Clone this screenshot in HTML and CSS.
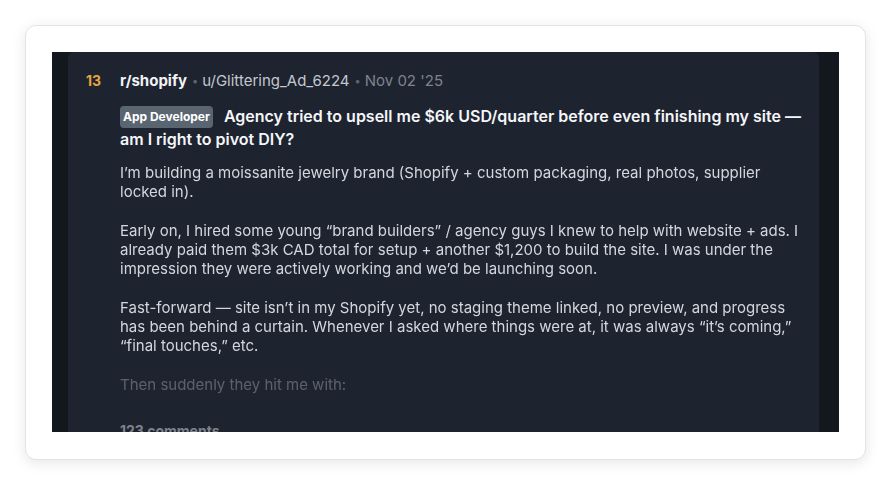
FILE: index.html
```html
<!DOCTYPE html>
<html lang="en">
<head>
<meta charset="utf-8">
<link rel="stylesheet" href="styles.css">
</head>
<body>
<div class="frame">
  <div class="screen">
    <div class="card">
      <div class="rank">13</div>
      <div class="main">
        <div class="meta">
          <span class="sub">r/shopify</span><span class="dot">•</span><span class="user">u/Glittering_Ad_6224</span><span class="dot">•</span><span class="date">Nov 02 '25</span>
        </div>
        <h2 class="title"><span class="flair">App Developer</span>Agency tried to upsell me $6k USD/quarter before even finishing my site — am I right to pivot DIY?</h2>
        <div class="body">
          <p>I’m building a moissanite jewelry brand (Shopify + custom packaging, real photos, supplier locked in).</p>
          <p>Early on, I hired some young “brand builders” / agency guys I knew to help with website + ads. I already paid them $3k CAD total for setup + another $1,200 to build the site. I was under the impression they were actively working and we’d be launching soon.</p>
          <p>Fast-forward — site isn’t in my Shopify yet, no staging theme linked, no preview, and progress has been behind a curtain. Whenever I asked where things were at, it was always “it’s coming,” “final touches,” etc.</p>
          <p>Then suddenly they hit me with:</p>
        </div>
        <div class="footer">123 comments</div>
      </div>
    </div>
  </div>
</div>
</body>
</html>
```
FILE: styles.css
```css
* { box-sizing: border-box; }
html, body { margin: 0; padding: 0; }
body {
  background: #ffffff;
  font-family: Inter, "Noto Sans", "Liberation Sans", sans-serif;
  width: 890px;
  height: 484px;
  overflow: hidden;
}
.frame {
  margin: 25px 0 0 25px;
  width: 841px;
  height: 435px;
  padding: 26px;
  background: #ffffff;
  border-radius: 11px;
  border: 1px solid #e4e4e6;
  box-shadow: 0 3px 14px rgba(0, 0, 0, 0.10);
}
.screen {
  background: #13181e;
  height: 380px;
  overflow: hidden;
  padding: 0 20px 0 16px;
}
.card {
  background: #1e2330;
  border-radius: 6px 6px 0 0;
  min-height: 420px;
  display: flex;
  padding: 19px 12px 0 18px;
}
.rank {
  width: 34px;
  flex: none;
  color: #e8a33c;
  font-weight: 700;
  font-size: 14px;
  line-height: 20px;
}
.main { flex: 1; min-width: 0; }
.meta {
  font-size: 15px;
  line-height: 20px;
  color: #c3c8cf;
  white-space: nowrap;
}
.sub { color: #f1f3f6; font-weight: 700; }
.dot { color: #5f6670; font-size: 11px; margin: 0 4px 0 5px; vertical-align: 1px; }
.date { color: #7d848e; }
.title {
  margin: 14px 0 0 0;
  font-size: 16px;
  font-weight: 600;
  line-height: 23px;
  color: #f4f6f8;
}
.flair {
  display: inline-block;
  background: #5a6572;
  color: #ffffff;
  font-size: 12px;
  font-weight: 700;
  line-height: 22px;
  height: 22px;
  padding: 0 3px;
  border-radius: 4px;
  margin-right: 11px;
  vertical-align: 1px;
}
.body {
  margin-top: 12px;
  font-size: 15px;
  line-height: 19.25px;
  color: #d3d7dd;
  padding-right: 4px;
  -webkit-mask-image: linear-gradient(to bottom, #000 calc(100% - 36px), rgba(0,0,0,0.34) calc(100% - 18px));
  mask-image: linear-gradient(to bottom, #000 calc(100% - 36px), rgba(0,0,0,0.34) calc(100% - 18px));
}
.body p { margin: 0 0 19.25px 0; }
.body p:last-child { margin-bottom: 0; }
.footer {
  margin-top: 28px;
  font-size: 14px;
  font-weight: 700;
  color: #7d838c;
}
```
